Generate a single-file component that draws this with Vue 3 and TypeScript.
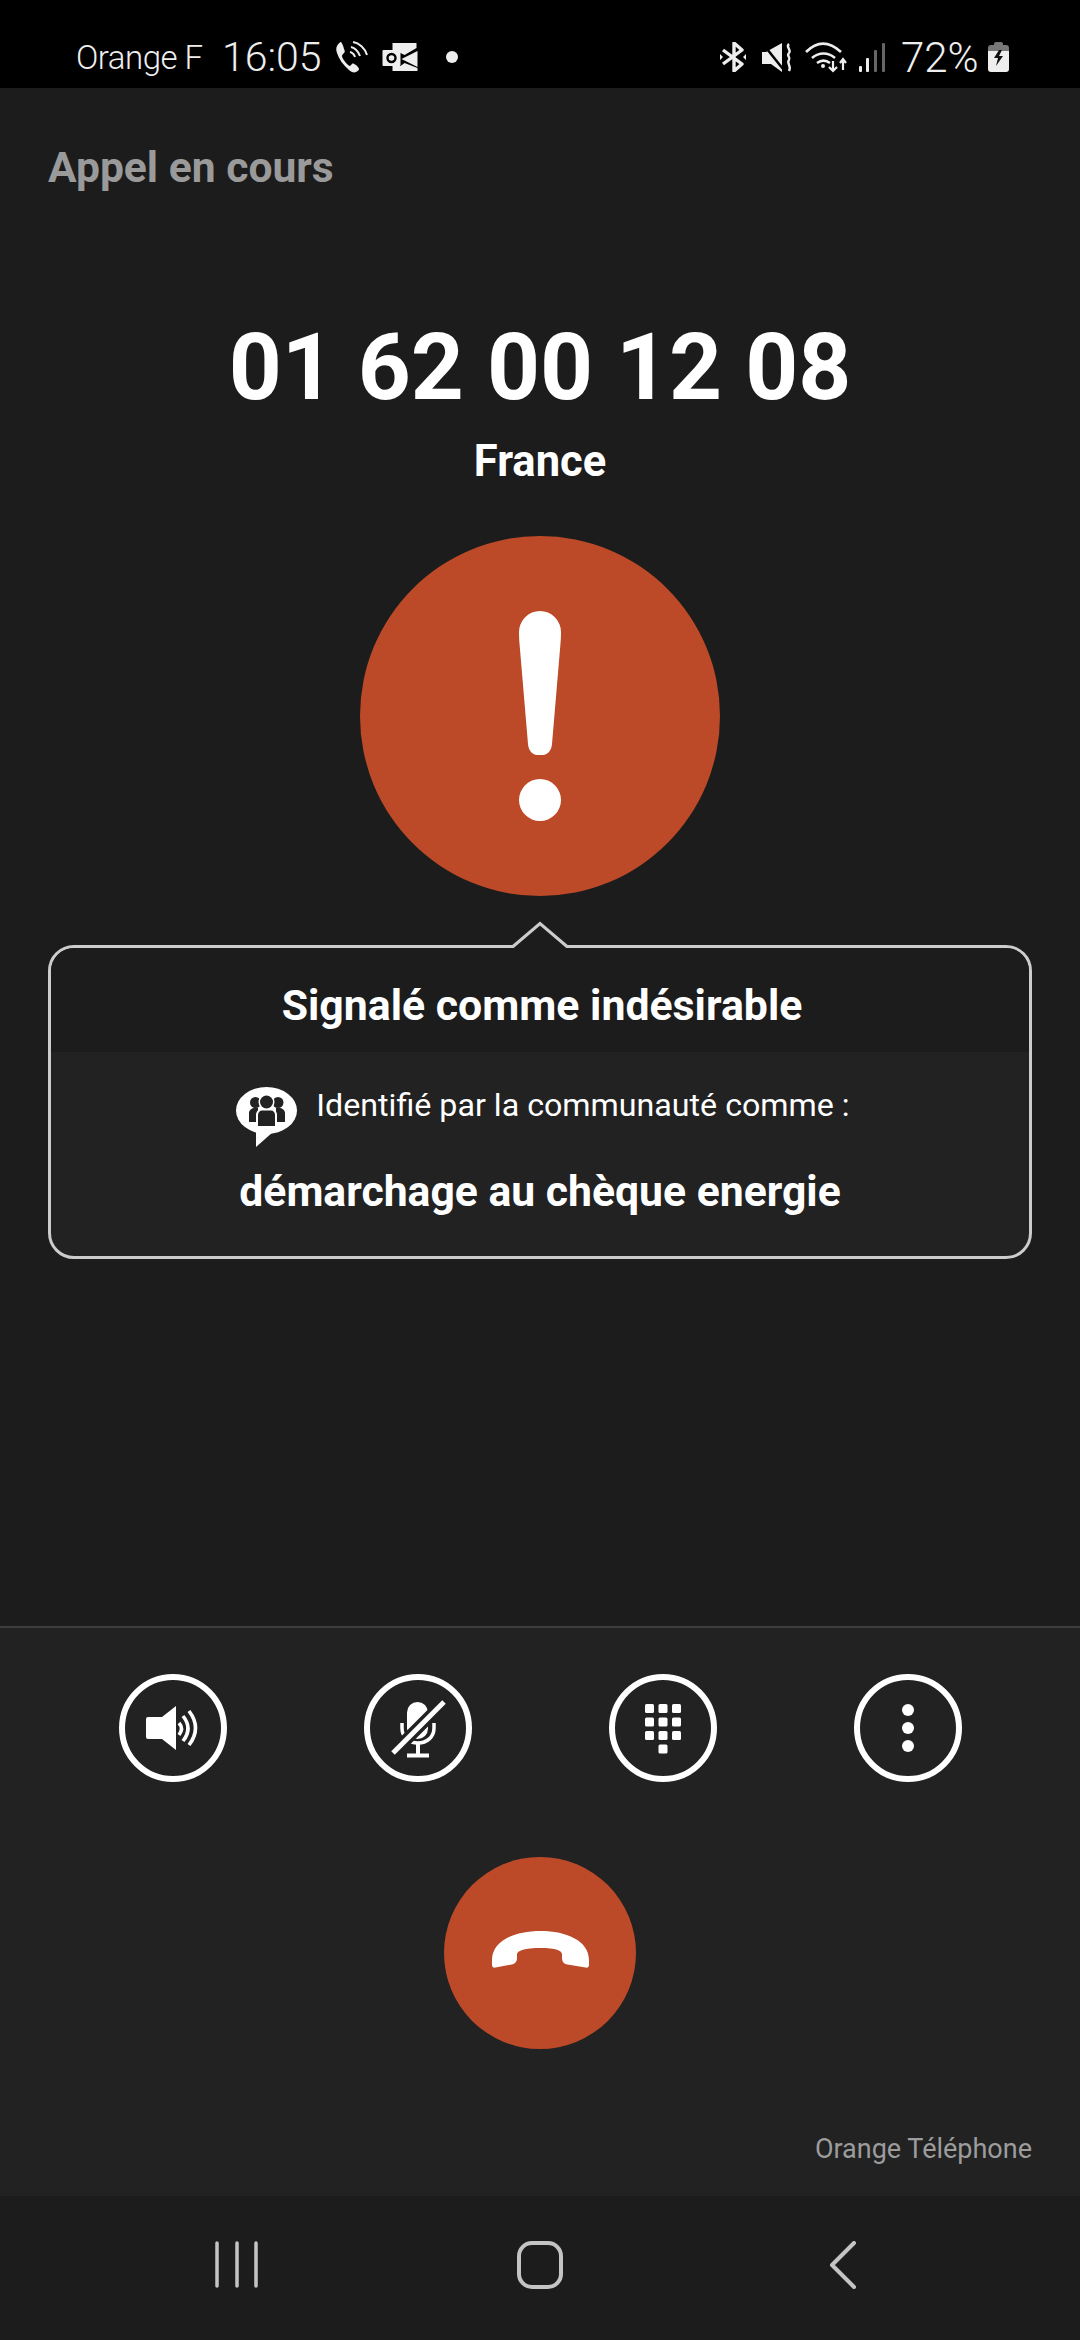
<script setup lang="ts">
const callNumber = "01 62 00 12 08"
const country = "France"
const signals = [
  { x: 1, y: 23, h: 6, on: true },
  { x: 8, y: 15, h: 14, on: true },
  { x: 16, y: 7, h: 22, on: false },
  { x: 24, y: 0, h: 29, on: false },
]
const keys = [
  [36, 30], [49.5, 30], [63, 30],
  [36, 43.5], [49.5, 43.5], [63, 43.5],
  [36, 57], [49.5, 57], [63, 57],
  [49.5, 70.5],
]
</script>

<template>
  <div class="screen">
    <header class="status">
      <span class="carrier">Orange F</span>
      <span class="time">16:05</span>
      <svg class="st-phone" width="33" height="32" viewBox="0 0 33 32" fill="none">
        <path d="M1 5c-1 2-1 4 0 7 2 6 6 12 12 17 2 2 5 3 7 2 2-1 3-2 3-3 0-1-1-2-3-4-2-1-3-2-4-1l-2 2c-1 0-2-1-4-3-2-3-4-5-4-7 0-1 1-2 2-3 1-1 1-2 0-4C7 4 6 2 5 1 4 1 2 3 1 5z" fill="#eee"/>
        <path d="M14 11c2 .5 4 2 5 5M15 6c4 1 7 4 9 9M17 1c6 1 12 6 14 13" stroke="#eee" stroke-width="2"/>
      </svg>
      <svg class="st-mail" width="37" height="28" viewBox="0 0 36 28">
        <path d="M10 0h24v5L22 12 12 7h-2z" fill="#eee"/>
        <path d="M19 16l16-8v16z" fill="#eee"/>
        <path d="M10 23h8l4-3 13 5v3H10z" fill="#eee"/>
        <rect x="0" y="7" width="18" height="16" rx="1" fill="#eee"/>
        <circle cx="9" cy="15" r="4" fill="none" stroke="#000" stroke-width="2.4"/>
      </svg>
      <span class="st-dot"></span>
      <div class="status-right">
        <svg class="st-bt" width="26" height="30" viewBox="0 0 26 30" fill="none">
          <path d="M3 8l19 14-8 7V1l8 7L3 22" stroke="#eee" stroke-width="3.4" stroke-linejoin="round"/>
          <path d="M0 12v6l3-3zM26 12v6l-3-3z" fill="#eee"/>
        </svg>
        <svg class="st-mute" width="30" height="29" viewBox="0 0 30 29" fill="none">
          <path d="M0 9h4L20 0v29L9 21H0z" fill="#eee"/>
          <path d="M1 1l20 25" stroke="#000" stroke-width="2.5"/>
          <path d="M27 1c-4 3 3 6 0 9-3 3 2 4 0 7-3 3 3 6 0 11" stroke="#eee" stroke-width="2.4"/>
        </svg>
        <svg class="st-wifi" width="44" height="32" viewBox="0 0 44 32" fill="none">
          <path d="M1 11C12 0 24 0 36 11M7 17c7-6 16-6 23 0M12 22c4-3 9-3 13 0" stroke="#eee" stroke-width="2.6"/>
          <circle cx="18" cy="25" r="2" fill="#eee"/>
          <path d="M28 20v10M24 26l4 4 4-4M38 29V18M35 22l3-4 3 4" stroke="#eee" stroke-width="2.2"/>
        </svg>
        <svg class="st-signal" width="28" height="29" viewBox="0 0 28 29">
          <rect
            v-for="bar in signals"
            :key="bar.x"
            :x="bar.x"
            :y="bar.y"
            width="3"
            :height="bar.h"
            rx="1"
            :fill="bar.on ? '#eee' : '#666'"
          />
        </svg>
        <span class="percent">72%</span>
        <svg class="st-battery" width="21" height="30" viewBox="0 0 21 30">
          <path d="M6 3V2a2 2 0 0 1 2-2h5a2 2 0 0 1 2 2v1h3a3 3 0 0 1 3 3v5H0V6a3 3 0 0 1 3-3z" fill="#777"/>
          <path d="M0 9h21v18a3 3 0 0 1-3 3H3a3 3 0 0 1-3-3z" fill="#eee"/>
          <path d="M11 8L6 16h4l-2 8 7-10h-4l3-6z" fill="#111"/>
        </svg>
      </div>
    </header>

    <main class="call">
      <h2 class="state">Appel en cours</h2>
      <h1 class="number">{{ callNumber }}</h1>
      <p class="country">{{ country }}</p>
      <svg class="alert" width="360" height="360" viewBox="0 0 360 360">
        <circle cx="180" cy="180" r="180" fill="#bc4a28"/>
        <path d="M159 96a21 21 0 0 1 42 0c0 6-.4 10-.8 15L192 208c-.5 7-5 11-9 11h-6c-4 0-8.5-4-9-11l-8.2-97c-.4-5-.8-9-.8-15z" fill="#fff"/>
        <circle cx="180" cy="264" r="21" fill="#fff"/>
      </svg>

      <section class="card">
        <svg class="card-arrow" width="60" height="28" viewBox="0 0 60 28" fill="none">
          <path d="M4 25h52v3H4z" fill="#1c1c1c"/>
          <path d="M3 25.500L30 2.500l27 23" fill="#1c1c1c" stroke="#ccc" stroke-width="3"/>
        </svg>
        <div class="card-head">Signalé comme indésirable</div>
        <div class="card-body">
          <div class="community">
            <svg width="62" height="60" viewBox="0 0 62 60">
              <ellipse cx="30.500" cy="23.500" rx="30.500" ry="23.500" fill="#fff"/>
              <path d="M20 42v18l17-15z" fill="#fff"/>
              <circle cx="19.500" cy="15.500" r="5.500" fill="#222"/>
              <circle cx="42" cy="15.500" r="5.500" fill="#222"/>
              <path d="M13 35V26c0-3 3-5 6-5h3v14zM40 21h3c3 0 6 2 6 5v9h-9z" fill="#222"/>
              <circle cx="30.500" cy="15" r="8" fill="#fff"/>
              <circle cx="30.500" cy="15" r="6.500" fill="#222"/>
              <path d="M20 41V28c0-4 3-6 6-6h9c3 0 6 2 6 6v13z" fill="#fff"/>
              <path d="M22 39V28c0-3 2-4.500 4-4.500h9c2 0 4 1.500 4 4.500v11z" fill="#222"/>
            </svg>
            <span>Identifié par la communauté comme :</span>
          </div>
          <div class="label">démarchage au chèque energie</div>
        </div>
      </section>
    </main>

    <footer class="controls">
      <div class="actions">
        <svg class="round" viewBox="0 0 108 108" fill="none">
          <circle cx="54" cy="54" r="51" stroke="#fff" stroke-width="6"/>
          <path d="M27 45a2 2 0 0 1 2-2h14l14-11v44L43 65H29a2 2 0 0 1-2-2z" fill="#fff"/>
          <path d="M60 49q5 5.500 0 12M64 42q10 12.500 0 25M70 37q13 17 0 34" stroke="#fff" stroke-width="3.600"/>
        </svg>
        <svg class="round" viewBox="0 0 108 108" fill="none">
          <circle cx="54" cy="54" r="51" stroke="#fff" stroke-width="6"/>
          <rect x="43" y="28" width="21" height="37" rx="10.500" fill="#fff"/>
          <path d="M38 49v5c0 9 7 15 16 15s16-6 16-15v-5" stroke="#fff" stroke-width="3.500"/>
          <path d="M54 69v11" stroke="#fff" stroke-width="4"/>
          <path d="M43 81.500h22" stroke="#fff" stroke-width="4"/>
          <path d="M29 79l51-51" stroke="#222" stroke-width="12"/>
          <path d="M29 79l51-51" stroke="#fff" stroke-width="5"/>
        </svg>
        <svg class="round" viewBox="0 0 108 108" fill="none">
          <circle cx="54" cy="54" r="51" stroke="#fff" stroke-width="6"/>
          <rect
            v-for="key in keys"
            :key="key.join()"
            :x="key[0]"
            :y="key[1]"
            width="9"
            height="9"
            rx="1.500"
            fill="#fff"
          />
        </svg>
        <svg class="round" viewBox="0 0 108 108" fill="none">
          <circle cx="54" cy="54" r="51" stroke="#fff" stroke-width="6"/>
          <circle cx="54" cy="36" r="6" fill="#fff"/>
          <circle cx="54" cy="54" r="6" fill="#fff"/>
          <circle cx="54" cy="72" r="6" fill="#fff"/>
        </svg>
      </div>
      <svg class="hangup" width="192" height="192" viewBox="0 0 192 192">
        <circle cx="96" cy="96" r="96" fill="#bc4a28"/>
        <path d="M48 103C48 84 70 74 96.500 74 123 74 145 84 145 103v5c0 2-1.500 3-3.500 2.500l-18-3c-4-.5-5.500-3-5.500-7v-3c0-4-6-6.500-21.500-6.500S73 93.500 73 97.500v3c0 4-1.500 6.500-5.500 7l-16 3c-2 .5-3.500-.5-3.500-2.500z" fill="#fff"/>
      </svg>
      <div class="brand">Orange Téléphone</div>
    </footer>

    <nav class="navbar">
      <svg width="44" height="47" viewBox="0 0 44 47" fill="none">
        <path d="M2 2v43M22 2v43M41 2v43" stroke="#c4c4c4" stroke-width="3.500" stroke-linecap="round"/>
      </svg>
      <svg width="46" height="48" viewBox="0 0 46 48" fill="none">
        <rect x="2" y="2" width="42" height="44" rx="13" stroke="#c4c4c4" stroke-width="4"/>
      </svg>
      <svg width="28" height="48" viewBox="0 0 28 48" fill="none">
        <path d="M25 2L3 24l22 22" stroke="#c4c4c4" stroke-width="4" stroke-linecap="round" stroke-linejoin="round"/>
      </svg>
    </nav>
  </div>
</template>

<style scoped>
.screen {
  width: 1080px;
  height: 2340px;
  display: flex;
  flex-direction: column;
  background: #1c1c1c;
  font-family: Roboto, "Liberation Sans", sans-serif;
  color: #fff;
  overflow: hidden;
}

.status {
  height: 88px;
  box-sizing: border-box;
  flex-shrink: 0;
  padding: 26px 71px 0 76px;
  display: flex;
  align-items: center;
  background: #000;
  color: #eee;
}

.carrier {
  font-size: 33px;
  font-weight: 300;
  letter-spacing: -0.5px;
  width: 146px;
}

.time {
  font-size: 41px;
  font-weight: 300;
  width: 114px;
}

.st-mail {
  margin-left: 13px;
}

.st-dot {
  width: 12px;
  height: 12px;
  border-radius: 50%;
  background: #eee;
  margin-left: 27px;
}

.status-right {
  margin-left: auto;
  display: flex;
  align-items: center;
}

.st-mute {
  margin-left: 16px;
}

.st-wifi {
  margin-left: 13px;
}

.st-signal {
  margin-left: 9px;
}

.percent {
  font-size: 42px;
  font-weight: 300;
  margin-left: 15px;
  width: 87px;
}

.call {
  flex: 1;
  display: flex;
  flex-direction: column;
  align-items: center;
  padding: 0 48px;
}

.state {
  align-self: flex-start;
  margin: 54px 0 0;
  font-size: 42.6px;
  line-height: 50px;
  font-weight: 700;
  color: #9a9a9a;
}

.number {
  margin: 126px 0 0;
  font-size: 92.5px;
  line-height: 100px;
  font-weight: 700;
}

.country {
  margin: 19px 0 0;
  font-size: 43.5px;
  line-height: 50px;
  font-weight: 700;
}

.alert {
  margin-top: 49px;
  flex-shrink: 0;
}

.card {
  position: relative;
  align-self: stretch;
  margin-top: 49px;
  box-sizing: border-box;
  height: 314px;
  border: 3px solid #ccc;
  border-radius: 26px;
  background: #222;
}

.card-arrow {
  position: absolute;
  top: -27px;
  left: 459px;
}

.card-head {
  height: 104px;
  padding: 8px 0 0 4px;
  line-height: 98px;
  box-sizing: border-box;
  background: #1c1c1c;
  border-radius: 23px 23px 0 0;
  text-align: center;
  font-size: 42.8px;
  font-weight: 700;
}

.card-body {
  display: flex;
  flex-direction: column;
  align-items: center;
}

.community {
  display: flex;
  align-items: flex-start;
  margin: 35px 0 0 6px;
  height: 60px;
  font-size: 32.2px;
  line-height: 38px;
}

.community span {
  margin-left: 18px;
  margin-top: -1px;
}

.label {
  margin-top: 19px;
  font-size: 42.7px;
  line-height: 50px;
  font-weight: 700;
}

.controls {
  position: relative;
  height: 570px;
  flex-shrink: 0;
  box-sizing: border-box;
  border-top: 2px solid #3e3e3e;
  background: #222;
  display: flex;
  flex-direction: column;
  align-items: center;
}

.actions {
  display: flex;
  justify-content: center;
  gap: 137px;
  margin-top: 46px;
}

.round {
  width: 108px;
  height: 108px;
}

.hangup {
  margin-top: 75px;
}

.brand {
  align-self: flex-end;
  margin: 83px 48px 0 0;
  font-size: 27px;
  line-height: 34px;
  color: #9c9c9c;
}

.navbar {
  height: 144px;
  flex-shrink: 0;
  box-sizing: border-box;
  display: flex;
  align-items: center;
  padding: 0 0 7px 215px;
}

.navbar svg:nth-child(2) {
  margin-left: 258px;
}

.navbar svg:nth-child(3) {
  margin-left: 266px;
}
</style>

<style>
html,
body {
  margin: 0;
  background: #1c1c1c;
}
</style>
